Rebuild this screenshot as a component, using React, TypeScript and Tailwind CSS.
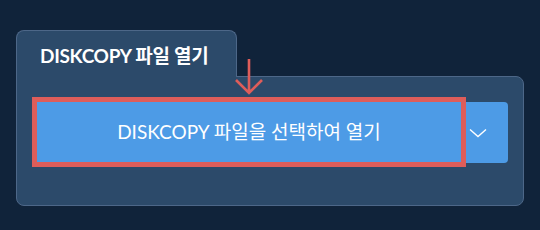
export default function App() {
  return (
    <div
      className="relative h-[230px] w-[540px] bg-[#10233a] pl-4 pt-[30px]"
      style={{ fontFamily: "Lato, 'Noto Sans CJK KR', sans-serif" }}
    >
      <div className="relative z-10 -mb-px flex h-[47px] w-[221px] items-center rounded-t-lg border border-b-0 border-[#4d6788] bg-[#2c4a6a] pl-[23px] pt-[4px]">
        <span className="text-[19px] font-bold tracking-[-0.3px] text-white">DISKCOPY 파일 열기</span>
      </div>
      <div className="h-[130px] w-[508px] rounded-tr-lg rounded-b-lg border border-[#4d6788] bg-[#2c4a6a] pl-5 pt-[25px]">
        <div className="flex gap-[5px]">
          <button
            type="button"
            className="h-[60px] w-[424px] rounded-none bg-[#4d9be6] text-[19px] text-white outline-[5px] outline-solid outline-[#de5d5a]"
          >
            DISKCOPY 파일을 선택하여 열기
          </button>
          <button
            type="button"
            className="flex h-[61px] w-[42px] items-center justify-start rounded-r-[4px] bg-[#4d9be6] pl-[3px] text-white"
          >
            <svg width="18" height="10" viewBox="0 0 18 10" fill="none" stroke="currentColor" strokeWidth="1.4">
              <path d="M1 1.5l8 7 8-7" />
            </svg>
          </button>
        </div>
      </div>
      <svg
        className="absolute left-[234px] top-[58px]"
        width="30"
        height="37"
        viewBox="0 0 30 37"
        fill="none"
        stroke="#de5d5a"
        strokeWidth="2.6"
      >
        <path d="M15 1v34M2 22l13 13 13-13" />
      </svg>
    </div>
  );
}
